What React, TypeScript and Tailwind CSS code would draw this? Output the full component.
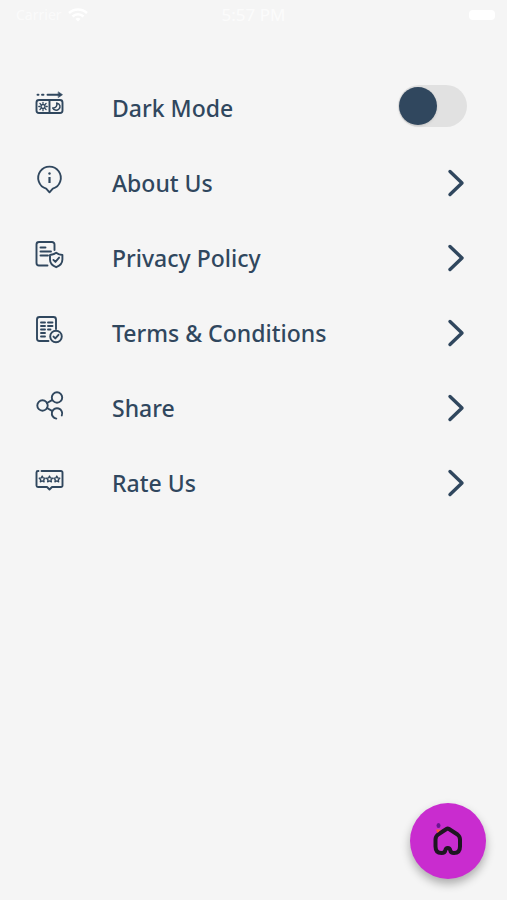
import { useState } from "react";
import type { ReactNode } from "react";

interface SettingsIconProps {
  children: ReactNode;
}

function SettingsIcon({ children }: SettingsIconProps) {
  return (
    <svg
      viewBox="0 0 32 32"
      className="w-8 h-8 shrink-0 -mt-2"
      fill="none"
      stroke="currentColor"
      strokeWidth="1.9"
      strokeLinecap="round"
      strokeLinejoin="round"
      aria-hidden="true"
    >
      {children}
    </svg>
  );
}

function DarkModeIcon() {
  return (
    <SettingsIcon>
      {/* Arrow */}
      <path d="M4.500 5.700h1M9 5.700h1.500M14.500 5.700h12" />
      <path d="M25.500 3l4 2.700-4 2.700z" fill="currentColor" strokeWidth="0.600" />
      {/* Sun and moon panels */}
      <rect x="3.500" y="11" width="26" height="13" rx="2.500" />
      <path d="M16.500 11v13" />
      <circle cx="10" cy="17.500" r="2" strokeWidth="1.400" />
      <path
        d="M10 13.300v1M10 20.700v1M5.800 17.500h1M13.200 17.500h1M6.900 14.400l.8.800M12.300 19.800l.8.800M6.900 20.600l.8-.8M12.300 15.200l.8-.8"
        strokeWidth="1.300"
      />
      <path
        d="M23.700 13.900c.9 2.700-.9 5.400-4 5.100 1 2.200 4 3 6 1.200 2.300-2 1.600-5.500-2-6.300z"
        strokeWidth="1.500"
      />
    </SettingsIcon>
  );
}

function AboutIcon() {
  return (
    <SettingsIcon>
      <path d="M13.200 24.700A11.300 11.300 0 1 1 19.800 24.700L16.500 28.300z" />
      <path d="M16.500 13v6" strokeWidth="2.200" strokeLinecap="butt" />
      <circle cx="16.500" cy="9.500" r="1.200" fill="currentColor" stroke="none" />
    </SettingsIcon>
  );
}

function PrivacyIcon() {
  return (
    <SettingsIcon>
      <path d="M14.500 26.500H6a2.500 2.500 0 0 1-2.500-2.500V5.500A2.500 2.500 0 0 1 6 3h13A2.500 2.500 0 0 1 21.500 5.500V11" />
      <path d="M7.500 8.500h5M7.500 12.500H18M7.500 16.500H15" />
      <path d="M23.200 13.800c1.700 1.300 3.600 2 6.200 2.200v4.500c0 3.500-2.500 6.200-6.200 7.700-3.700-1.500-6.200-4.200-6.200-7.700V16c2.500-.2 4.500-.9 6.200-2.200z" />
      <path d="M20.400 20.900l2 2 3.700-4.300" />
    </SettingsIcon>
  );
}

function TermsIcon() {
  return (
    <SettingsIcon>
      <path d="M15.500 27H6.500A2.500 2.500 0 0 1 4 24.500v-19A2.500 2.500 0 0 1 6.500 3h14A2.500 2.500 0 0 1 23 5.500V15" />
      <path d="M8 8.500h4M8 12h4M8 15.500h4M8 19h4M8 22.500h4M15 8.500h4.500M15 12h4.500M15 15.500h2.500" />
      <circle cx="23" cy="22.500" r="5.800" />
      <path d="M20.500 22.600l1.800 1.800 3.200-3.600" />
    </SettingsIcon>
  );
}

function ShareIcon() {
  return (
    <SettingsIcon>
      <circle cx="9.500" cy="16.500" r="5.200" />
      <circle cx="24" cy="8.500" r="5.200" />
      <path d="M14 14l5-2.900M14 19l5 2.900" />
      <path d="M23.300 29.600a5.200 5.200 0 1 1 5.500-3.100" />
    </SettingsIcon>
  );
}

function RateIcon() {
  const star =
    "M0-3l.9 1.900 2.100.3-1.500 1.500.4 2.100L0 1.800l-1.900 1 .4-2.100L-3-.8l2.100-.3z";
  return (
    <SettingsIcon>
      <path d="M8.500 7H28a1.500 1.500 0 0 1 1.500 1.500v13A1.500 1.500 0 0 1 28 23h-9l-2.500 2.500L14 23H5a1.500 1.500 0 0 1-1.500-1.500v-13A1.500 1.500 0 0 1 5 7h.5" />
      <path d={star} transform="translate(9.200 15)" strokeWidth="1.300" />
      <path d={star} transform="translate(16.500 15)" strokeWidth="1.300" />
      <path d={star} transform="translate(23.800 15)" strokeWidth="1.300" />
    </SettingsIcon>
  );
}

const links = [
  { label: "About Us", href: "#about", icon: <AboutIcon /> },
  { label: "Privacy Policy", href: "#privacy", icon: <PrivacyIcon /> },
  { label: "Terms & Conditions", href: "#terms", icon: <TermsIcon /> },
  { label: "Share", href: "#share", icon: <ShareIcon /> },
  { label: "Rate Us", href: "#rate", icon: <RateIcon /> },
];

function StatusBar() {
  return (
    <header className="grid grid-cols-3 items-center h-[30px] px-3 text-white">
      <div className="flex items-center gap-1.5 pl-1">
        <span className="text-sm text-white/60">Carrier</span>
        <svg viewBox="0 0 20 15" className="w-5 h-4" fill="none" stroke="currentColor" strokeWidth="2.5" aria-hidden="true">
          <path d="M1 5.500a13 13 0 0 1 18 0M4.500 9a8 8 0 0 1 11 0" />
          <path d="M7.500 11.500a3.600 3.600 0 0 1 5 0L10 14z" fill="currentColor" stroke="none" />
        </svg>
      </div>
      <span className="text-center text-[17px] text-white/70">5:57 PM</span>
      <div className="flex justify-end">
        <div className="w-[26px] h-2.5 rounded-sm bg-white" />
      </div>
    </header>
  );
}

export default function App() {
  const [darkMode, setDarkMode] = useState(false);

  return (
    <div className="min-h-screen bg-[#f5f5f5] font-['Noto_Sans',sans-serif] text-[#30475e]">
      <StatusBar />

      <main className="pt-[41px] pl-[33px] pr-10 text-[23px] font-medium">
        {/* Dark mode switch */}
        <div className="flex items-center h-[75px]">
          <DarkModeIcon />
          <label htmlFor="dark-mode" className="flex-1 ml-[47px]">
            Dark Mode
          </label>
          <input
            id="dark-mode"
            type="checkbox"
            role="switch"
            checked={darkMode}
            onChange={() => setDarkMode(!darkMode)}
            className="appearance-none flex items-center w-[69px] h-[42px] mb-1.5 px-px shrink-0 rounded-full bg-[#e1e1e1] cursor-pointer before:w-[38px] before:h-[38px] before:rounded-full before:bg-[#30475e] before:shadow before:transition-transform checked:before:translate-x-7"
          />
        </div>

        <nav>
          {links.map((link) => (
            <a key={link.label} href={link.href} className="flex items-center h-[75px]">
              {link.icon}
              <span className="flex-1 ml-[47px]">{link.label}</span>
              <svg
                viewBox="0 0 20 30"
                className="w-5 h-[30px] shrink-0"
                fill="none"
                stroke="currentColor"
                strokeWidth="3.4"
                strokeLinecap="round"
                strokeLinejoin="round"
                aria-hidden="true"
              >
                <path d="M3 2.500l12 11.500-12 11.500" />
              </svg>
            </a>
          ))}
        </nav>
      </main>

      {/* Home button */}
      <button
        type="button"
        aria-label="Home"
        className="fixed right-[21px] bottom-[21px] flex items-center justify-center w-[76px] h-[76px] rounded-full bg-[#c92ccf] shadow-[0_5px_10px_rgba(0,0,0,0.3)] cursor-pointer"
      >
        <svg viewBox="0 0 36 36" className="w-9 h-9" fill="none" aria-hidden="true">
          <path
            d="M16.500 6L8 11.500Q5.500 13.500 5.500 16.500V23.500Q5.500 30 11.500 30Q14.800 30 15.300 27.300Q15.800 25 17.800 25Q19.800 25 20.300 27.300Q20.800 30 24 30Q30 30 30 23.500V16.500Q30 13.500 27.500 11.500L19 6Q17.700 5.200 16.500 6z"
            stroke="#1d1620"
            strokeWidth="4"
            strokeLinejoin="round"
          />
          <ellipse cx="8.500" cy="2.500" rx="2" ry="2.500" fill="#6a1590" />
          <path d="M6 6.500h5l-3.500 3.500z" fill="#ff5a36" />
        </svg>
      </button>
    </div>
  );
}
